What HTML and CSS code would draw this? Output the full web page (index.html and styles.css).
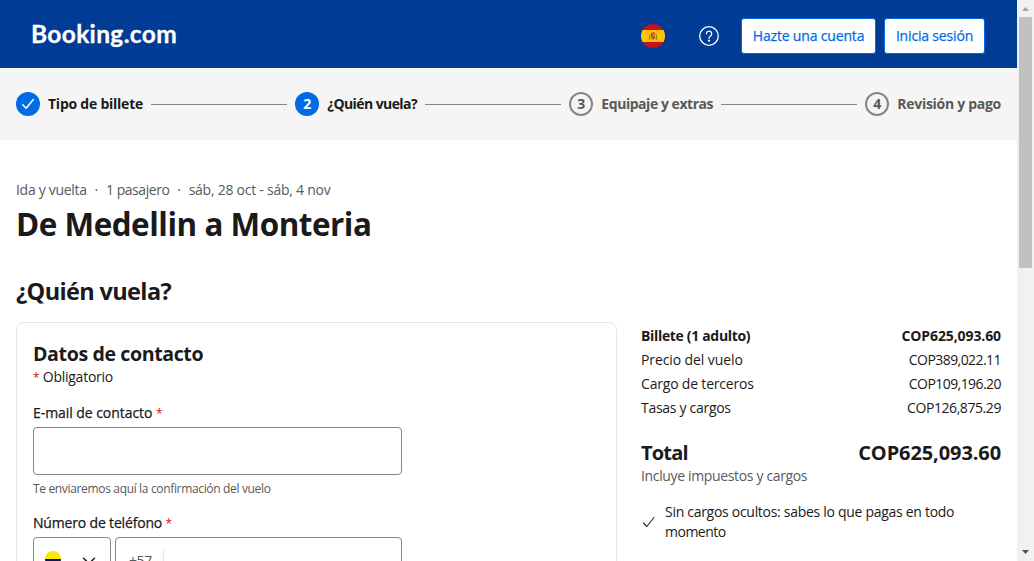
FILE: index.html
```html
<!DOCTYPE html>
<html lang="es">
<head>
<meta charset="utf-8">
<title>Booking.com</title>
<link rel="stylesheet" href="styles.css">
</head>
<body>
<div class="window">
  <div class="page">
    <header class="header">
      <div class="logo">Booking.com</div>
      <div class="header-actions">
        <svg class="flag" viewBox="0 0 24 24">
          <clipPath id="round"><circle cx="12" cy="12" r="12"/></clipPath>
          <g clip-path="url(#round)">
            <path fill="#c8101c" d="M0 0h24v24H0z"/>
            <path fill="#ffc400" d="M0 6h24v12H0z"/>
            <path fill="#c4681c" d="M10.300 8.200h3.400l.5 1.800h-4.400zM9.700 10h4.600v3.500q0 2-2.300 2.200-2.300-.2-2.300-2.200z"/>
            <path fill="#b5701f" d="M8 10.500h1v4.500H8zM15 10.500h1v4.500h-1zM7.500 14.500h2v1h-2zM14.500 14.500h2v1h-2z"/>
            <path fill="#9a3418" d="M10.300 10.500h1.500v1.500h-1.500zM12 12.500h1.500V14H12z"/>
            <path fill="#e9a08b" d="M12.200 10.800h1.300v1.400h-1.300z"/>
          </g>
        </svg>
        <svg class="help" viewBox="0 0 20 20" fill="none" stroke="#fff" stroke-width="1.300" stroke-linecap="round">
          <circle cx="10" cy="10" r="9.300"/>
          <path d="M7.400 7.800a2.650 2.650 0 1 1 4.200 2.100c-1 .7-1.600 1.100-1.600 2.200"/>
          <circle cx="10" cy="14.700" r=".5" fill="#fff"/>
        </svg>
        <div class="buttons">
          <a class="button register">Hazte una cuenta</a>
          <a class="button login">Inicia sesión</a>
        </div>
      </div>
    </header>
    <nav class="steps">
      <div class="step"><span class="dot done"><svg viewBox="0 0 24 24" fill="none" stroke="#fff" stroke-width="1.500" stroke-linecap="round" stroke-linejoin="round"><path d="M6.800 12.700l3.300 3.600 7.200-8.700"/></svg></span><span class="s1">Tipo de billete</span></div>
      <i class="line"></i>
      <div class="step"><span class="dot active">2</span><span class="s2">¿Quién vuela?</span></div>
      <i class="line"></i>
      <div class="step todo"><span class="dot">3</span><span class="s3">Equipaje y extras</span></div>
      <i class="line"></i>
      <div class="step todo"><span class="dot">4</span><span class="s4">Revisión y pago</span></div>
    </nav>
    <main class="content">
      <div class="trip"><span class="t1">Ida y vuelta</span><span class="sep">·</span><span class="t2">1 pasajero</span><span class="sep">·</span><span class="t3">sáb, 28 oct - sáb, 4 nov</span></div>
      <h1>De Medellin a Monteria</h1>
      <h2>¿Quién vuela?</h2>
      <div class="columns">
        <section class="card">
          <h3>Datos de contacto</h3>
          <p class="required"><b>*</b> Obligatorio</p>
          <label class="label email">E-mail de contacto <b>*</b></label>
          <div class="input"></div>
          <p class="hint">Te enviaremos aquí la confirmación del vuelo</p>
          <label class="label phone">Número de teléfono <b>*</b></label>
          <div class="phone-row">
            <div class="country">
              <svg class="co-flag" viewBox="0 0 16 16"><clipPath id="co"><circle cx="8" cy="8" r="8"/></clipPath><g clip-path="url(#co)"><path fill="#ffe800" d="M0 0h16v8H0z"/><path fill="#00148e" d="M0 8h16v4H0z"/><path fill="#da0010" d="M0 12h16v4H0z"/></g></svg>
              <svg class="chevron" viewBox="0 0 14 8" fill="none" stroke="#1a1a1a" stroke-width="1.500" stroke-linecap="round" stroke-linejoin="round"><path d="M1.500 1.300L7 6.500l5.500-5.200"/></svg>
            </div>
            <div class="number"><span class="prefix">+57</span></div>
          </div>
        </section>
        <aside class="summary">
          <div class="row strong"><span class="l1">Billete (1 adulto)</span><span class="v1">COP625,093.60</span></div>
          <div class="row"><span class="l2">Precio del vuelo</span><span class="v2">COP389,022.11</span></div>
          <div class="row"><span class="l3">Cargo de terceros</span><span class="v3">COP109,196.20</span></div>
          <div class="row"><span class="l4">Tasas y cargos</span><span class="v4">COP126,875.29</span></div>
          <div class="total"><span class="l5">Total</span><span class="v5">COP625,093.60</span></div>
          <p class="taxes">Incluye impuestos y cargos</p>
          <div class="benefit">
            <svg viewBox="0 0 16 16" fill="none" stroke="#333" stroke-width="1.200" stroke-linecap="round" stroke-linejoin="round"><path d="M2.500 9l3.300 3.500 7.200-9"/></svg>
            <p><span class="b1">Sin cargos ocultos: sabes lo que pagas en todo</span><br><span class="b2">momento</span></p>
          </div>
        </aside>
      </div>
    </main>
  </div>
  <div class="scrollbar">
    <svg viewBox="0 0 17 17"><path fill="#a3a3a3" d="M5 11h7L8.500 7z"/></svg>
    <div class="thumb"></div>
    <svg class="down" viewBox="0 0 17 17"><path fill="#505050" d="M5 6h7l-3.500 4z"/></svg>
  </div>
</div>
</body>
</html>
```
FILE: styles.css
```css
* { box-sizing: border-box; }
body { margin: 0; overflow: hidden; font: 14px/20px "Open Sans", "Noto Sans", sans-serif; color: #1a1a1a; background: #fff; }
h1, h2, h3, p { margin: 0; }
svg { display: block; flex: none; }
span { white-space: nowrap; }
.window { display: flex; height: 561px; overflow: hidden; }
.page { width: 1017px; flex: none; }
.header { height: 68px; background: #003b95; display: flex; align-items: center; justify-content: space-between; padding: 4px 32px 0 31px; color: #fff; }
.logo { font: 700 24.5px/32px Lato, sans-serif; letter-spacing: .35px; padding-bottom: 5px; -webkit-text-stroke: .3px #fff; }
.header-actions { display: flex; align-items: center; }
.flag { width: 24px; height: 24px; margin-right: 34px; }
.help { width: 20px; height: 20px; margin-right: 22px; }
.buttons { display: flex; gap: 8px; }
.button { height: 36px; line-height: 34px; border: 1px solid #006ce4; border-radius: 3px; background: #fff; color: #006ce4; text-align: center; white-space: nowrap; -webkit-text-stroke: .25px; }
.register { width: 135px; letter-spacing: -.17px; }
.login { width: 101px; letter-spacing: -.17px; }
.steps { height: 72px; background: #f5f5f5; display: flex; align-items: center; gap: 8px; padding: 0 16px; font-weight: 700; }
.step { display: flex; align-items: center; gap: 8px; }
.s1 { letter-spacing: -.24px; }
.s2 { letter-spacing: -.58px; }
.s3 { letter-spacing: -.46px; }
.s4 { letter-spacing: -.29px; }
.todo { color: #595959; }
.dot { width: 24px; height: 24px; border: 2px solid #868686; border-radius: 50%; display: flex; align-items: center; justify-content: center; flex: none; }
.done, .active { border: 0; background: #006ce4; color: #fff; }
.line { flex: 1; height: 1px; background: #868686; }
.content { padding: 40px 16px 0; }
.trip { display: flex; color: #595959; }
.t1 { letter-spacing: -.3px; }
.t2 { letter-spacing: -.44px; }
.t3 { letter-spacing: -.25px; }
.sep { width: 19.2px; text-align: center; }
h1 { font-size: 31.4px; line-height: 40px; margin-top: 4px; letter-spacing: -.47px; }
h2 { font-size: 23.5px; line-height: 32px; margin-top: 31px; letter-spacing: -.63px; }
.columns { display: flex; gap: 24px; margin-top: 15px; }
.card { width: 601px; height: 300px; border: 1px solid #e7e7e7; border-radius: 8px; padding: 17px 16px 0; }
.card b { color: #d4111e; font-weight: 400; font-size: 12px; line-height: 0; -webkit-text-stroke: 0; }
h3 { font-size: 19.6px; line-height: 28px; letter-spacing: -.4px; }
.required { margin-top: -1px; letter-spacing: -.25px; }
.label { display: block; -webkit-text-stroke: .25px; }
.email { margin-top: 16px; margin-bottom: 4px; letter-spacing: -.06px; }
.input { width: 369px; height: 48px; border: 1px solid #868686; border-radius: 4px; }
.hint { font-size: 12px; line-height: 18px; margin-top: 5px; color: #595959; letter-spacing: -.34px; }
.phone { margin-top: 15px; margin-bottom: 4px; letter-spacing: -.17px; }
.phone-row { display: flex; gap: 4px; width: 369px; }
.country, .number { height: 48px; border: 1px solid #868686; border-radius: 4px; display: flex; }
.country { width: 78px; padding: 13px 14px 0 11px; justify-content: space-between; }
.co-flag { width: 16px; height: 16px; }
.chevron { width: 14px; height: 8px; margin-top: 6px; }
.number { flex: 1; padding: 11px 13px; }
.prefix { width: 35px; height: 24px; line-height: 24px; border-right: 1px solid #e7e7e7; color: #595959; letter-spacing: -.4px; }
.summary { width: 360px; padding-top: 4px; }
.row { display: flex; justify-content: space-between; height: 24px; }
.strong { font-weight: 700; }
.l1 { letter-spacing: -.33px; }
.v1, .l2, .v5 { letter-spacing: -.1px; }
.l3 { letter-spacing: -.19px; }
.l4 { letter-spacing: -.29px; }
.v2, .v3 { letter-spacing: -.56px; }
.v4 { letter-spacing: -.43px; }
.l5 { letter-spacing: -.8px; }
.b1 { letter-spacing: -.29px; }
.b2 { letter-spacing: -.5px; }
.total { display: flex; justify-content: space-between; font-size: 20px; line-height: 28px; font-weight: 700; margin-top: 17px; }
.taxes { color: #595959; letter-spacing: -.35px; margin-top: -1px; }
.benefit { display: flex; align-items: center; gap: 8px; margin-top: 16px; }
.benefit svg { width: 16px; height: 16px; }
.scrollbar { width: 17px; background: #f1f1f1; display: flex; flex-direction: column; }
.scrollbar svg { width: 17px; height: 17px; }
.thumb { width: 13px; height: 251px; margin-left: 2px; background: #c1c1c1; }
.down { margin-top: auto; }
```
